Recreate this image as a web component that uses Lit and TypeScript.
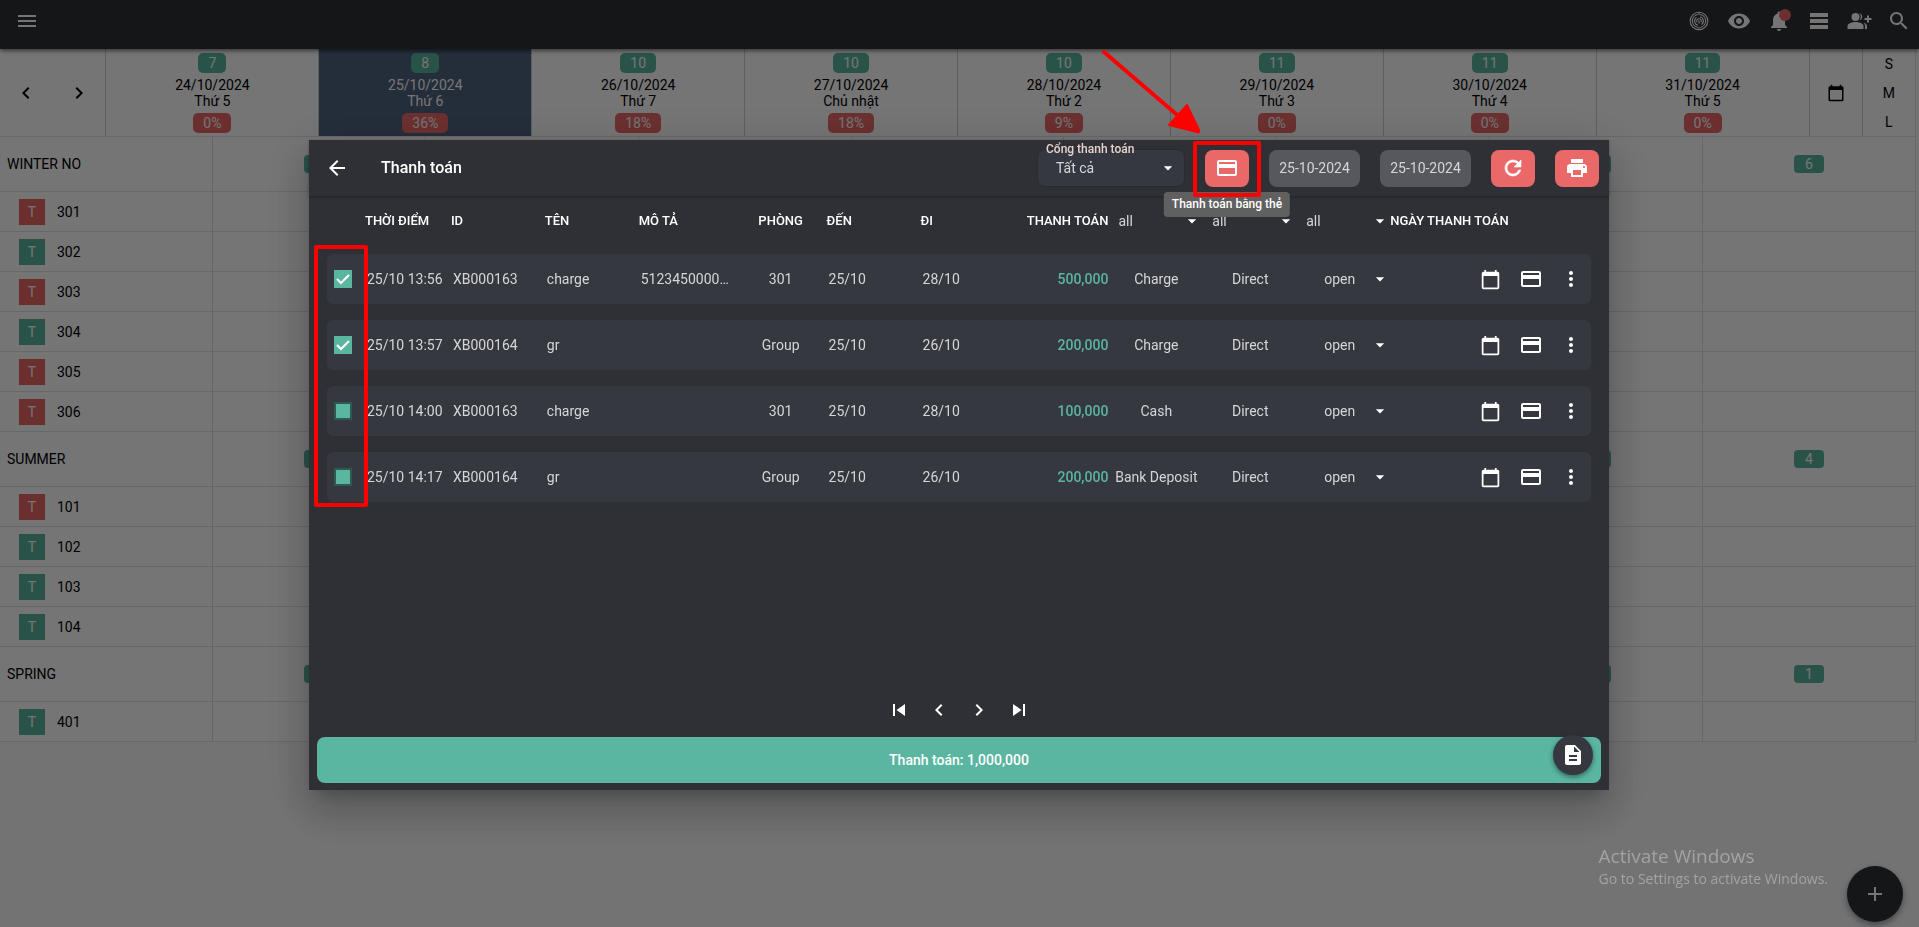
import { LitElement, html, css, svg, nothing } from "lit";
import { customElement, property, state } from "lit/decorators.js";
import { classMap } from "lit/directives/class-map.js";

const ICONS: Record<string, unknown> = {
  menu: svg`<path d="M3 18h18v-2H3v2zm0-5h18v-2H3v2zm0-7v2h18V6H3z"/>`,
  left: svg`<path d="M15.41 7.41L14 6l-6 6 6 6 1.41-1.41L10.83 12z"/>`,
  right: svg`<path d="M10 6L8.59 7.41 13.17 12l-4.58 4.59L10 18l6-6z"/>`,
  first: svg`<path d="M6 6h2v12H6zm3.5 6l8.500 6V6z"/>`,
  last: svg`<path d="M6 18l8.500-6L6 6v12zM16 6v12h2V6h-2z"/>`,
  back: svg`<path d="M20 11H7.830l5.590-5.590L12 4l-8 8 8 8 1.410-1.410L7.830 13H20v-2z"/>`,
  calendar: svg`<path d="M20 3h-1V1h-2v2H7V1H5v2H4c-1.100 0-2 .9-2 2v16c0 1.100.9 2 2 2h16c1.100 0 2-.9 2-2V5c0-1.100-.9-2-2-2zm0 18H4V8h16v13z"/>`,
  card: svg`<path d="M20 4H4c-1.110 0-1.990.89-1.990 2L2 18c0 1.110.89 2 2 2h16c1.110 0 2-.89 2-2V6c0-1.110-.89-2-2-2zm0 14H4v-6h16v6zm0-10H4V6h16v2z"/>`,
  more: svg`<path d="M12 8c1.100 0 2-.9 2-2s-.9-2-2-2-2 .9-2 2 .9 2 2 2zm0 2c-1.100 0-2 .9-2 2s.9 2 2 2 2-.9 2-2-.9-2-2-2zm0 6c-1.100 0-2 .9-2 2s.9 2 2 2 2-.9 2-2-.9-2-2-2z"/>`,
  refresh: svg`<path d="M17.650 6.350C16.200 4.900 14.210 4 12 4c-4.420 0-7.990 3.580-7.990 8s3.570 8 7.990 8c3.730 0 6.840-2.550 7.730-6h-2.080c-.82 2.330-3.040 4-5.650 4-3.310 0-6-2.690-6-6s2.690-6 6-6c1.660 0 3.140.69 4.220 1.780L13 11h7V4l-2.350 2.350z" stroke="currentColor" stroke-width=".6"/>`,
  print: svg`<path d="M19 8H5c-1.660 0-3 1.340-3 3v6h4v4h12v-4h4v-6c0-1.660-1.340-3-3-3zm-3 11H8v-5h8v5zm3-7c-.55 0-1-.45-1-1s.45-1 1-1 1 .45 1 1-.45 1-1 1zm-1-9H6v4h12V3z"/>`,
  doc: svg`<path d="M14 2H6c-1.100 0-1.990.9-1.990 2L4 20c0 1.100.89 2 1.990 2H18c1.100 0 2-.9 2-2V8l-6-6zm2 16H8v-2h8v2zm0-4H8v-2h8v2zm-3-5V3.500L18.500 9H13z"/>`,
  caret: svg`<path d="M7 10l5 5 5-5z"/>`,
  add: svg`<path d="M19 13h-6v6h-2v-6H5v-2h6V5h2v6h6v2z"/>`,
  eye: svg`<path d="M12 4.500C7 4.500 2.730 7.610 1 12c1.730 4.390 6 7.500 11 7.500s9.270-3.110 11-7.500c-1.730-4.390-6-7.500-11-7.500zM12 17c-2.760 0-5-2.240-5-5s2.240-5 5-5 5 2.240 5 5-2.240 5-5 5zm0-8c-1.660 0-3 1.340-3 3s1.340 3 3 3 3-1.340 3-3-1.340-3-3-3z"/>`,
  bell: svg`<path d="M12 22c1.100 0 2-.9 2-2h-4c0 1.100.89 2 2 2zm6-6v-5c0-3.070-1.640-5.640-4.500-6.320V4c0-.83-.67-1.500-1.500-1.500s-1.500.67-1.500 1.500v.68C7.630 5.360 6 7.920 6 11v5l-2 2v1h16v-1l-2-2z"/>`,
  list: svg`<path d="M3 4h18v4H3zM3 10h18v4H3zM3 16h18v4H3z"/>`,
  people: svg`<circle cx="8.500" cy="8" r="4"/><path d="M.5 20v-3c0-2.600 5-4 8-4s8 1.400 8 4v3z"/><path d="M12.500 4.200a4 4 0 0 1 0 7.600c1.800-2.300 1.800-5.300 0-7.600zM16.700 13.800c1.900.7 3.300 1.700 3.300 3.200v3h-2v-3c0-1.300-.5-2.400-1.300-3.200zM20 9V6.500h2V9h2.500v2H22v2.500h-2V11h-2.500V9z"/>`,
  search: svg`<path d="M15.500 14h-.79l-.28-.27C15.410 12.590 16 11.110 16 9.500 16 5.910 13.090 3 9.500 3S3 5.910 3 9.500 5.910 16 9.500 16c1.610 0 3.090-.59 4.230-1.570l.27.28v.79l5 4.990L20.490 19l-4.990-5zm-6 0C7.010 14 5 11.990 5 9.500S7.010 5 9.500 5 14 7.010 14 9.500 11.990 14 9.500 14z"/>`,
  rings: svg`<g fill="none" stroke="currentColor" stroke-width="1.100"><circle cx="12" cy="12" r="8.800"/><path d="M13.200 5.500a6.600 6.600 0 0 1 0 13M10.800 18.500a6.600 6.600 0 0 1 0-13M12 3.200v3M12 17.800v3"/><path d="M13 7.700a4.400 4.400 0 0 1 1.500 7.900M11 16.300a4.400 4.400 0 0 1-1.500-7.900"/><path d="M10 13.200a2.300 2.300 0 1 1 4 0M12 11.500v3.200"/></g>`,
};

@customElement("mi-icon")
export class MiIcon extends LitElement {
  static styles = css`
    :host { display: inline-flex; width: 24px; height: 24px; flex: none; }
    svg { width: 100%; height: 100%; fill: currentColor; overflow: visible; }
  `;
  @property() name = "";
  render() {
    return html`<svg viewBox="0 0 24 24" aria-hidden="true">${ICONS[this.name] ?? nothing}</svg>`;
  }
}

const DAYS = [
  { free: 7, date: "24/10/2024", day: "Thứ 5", rate: "0%" },
  { free: 8, date: "25/10/2024", day: "Thứ 6", rate: "36%", today: true },
  { free: 10, date: "26/10/2024", day: "Thứ 7", rate: "18%" },
  { free: 10, date: "27/10/2024", day: "Chủ nhật", rate: "18%" },
  { free: 10, date: "28/10/2024", day: "Thứ 2", rate: "9%" },
  { free: 11, date: "29/10/2024", day: "Thứ 3", rate: "0%" },
  { free: 11, date: "30/10/2024", day: "Thứ 4", rate: "0%" },
  { free: 11, date: "31/10/2024", day: "Thứ 5", rate: "0%" },
];

const GROUPS = [
  {
    name: "WINTER NO",
    free: [3, 4, 5, 5, 5, 6, 6, 6],
    rooms: [
      { no: "301", busy: true },
      { no: "302", busy: false },
      { no: "303", busy: true },
      { no: "304", busy: false },
      { no: "305", busy: true },
      { no: "306", busy: true },
    ],
  },
  {
    name: "SUMMER",
    free: [3, 3, 4, 4, 4, 4, 4, 4],
    rooms: [
      { no: "101", busy: true },
      { no: "102", busy: false },
      { no: "103", busy: false },
      { no: "104", busy: false },
    ],
  },
  { name: "SPRING", free: [1, 1, 1, 1, 1, 1, 1, 1], rooms: [{ no: "401", busy: false }] },
];

@customElement("room-calendar")
export class RoomCalendar extends LitElement {
  static styles = css`
    :host { display: block; font: 14px/16px Roboto, sans-serif; color: #000; }
    button { font: inherit; color: inherit; background: none; border: 0; padding: 0; cursor: pointer; }
    .bar {
      height: 49px; box-sizing: border-box; padding: 0 8px 7px 15px; background: #2f3036; color: #fff;
      display: flex; align-items: center; justify-content: space-between;
      position: relative; box-shadow: 0 2px 4px rgba(0, 0, 0, 0.5);
    }
    .bar button { display: flex; position: relative; }
    .tools { display: flex; gap: 16px; }
    .dot { position: absolute; right: 0; top: 0; width: 12px; height: 12px; border-radius: 50%; background: #ea6868; }
    .head {
      display: grid; grid-template-columns: 2fr repeat(8, 4fr) 1fr 1fr; margin-right: 3px;
      height: 87px; background: #fff; border-bottom: 1px solid #e2e2e2;
    }
    .head > div { border-right: 1px solid #cfcfcf; min-width: 0; }
    .head > .sizes { border-right-color: #e2e2e2; }
    .nav { display: flex; align-items: center; justify-content: space-around; }
    .nav button, .pick button { display: flex; }
    .pick { display: flex; align-items: center; justify-content: center; }
    .pick mi-icon { width: 18px; height: 18px; }
    .sizes { display: flex; flex-direction: column; justify-content: space-around; align-items: center; }
    .day { display: flex; flex-direction: column; align-items: center; padding-top: 4px; box-sizing: border-box; }
    .today { background: #50637f; color: #fff; }
    .badge { line-height: 20px; padding: 0 10px; border-radius: 5px; color: #fff; background: #5ab6a0; }
    .rate { background: #ea6868; }
    .day .badge:first-child { margin-bottom: 4px; }
    .day .rate { margin-top: 4px; }
    table { width: calc(100% - 3px); table-layout: fixed; border-collapse: separate; border-spacing: 0; background: #fff; }
    th, td { padding: 0; border: 0 solid #e2e2e2; border-width: 0 1px 1px 0; height: 39px; font-weight: 400; box-sizing: border-box; }
    th { text-align: left; border-right-color: #dcdcdc; }
    .group th, .group td { height: 55px; text-align: center; }
    .group th { text-align: left; padding-left: 7px; }
    .room th, .room td { height: 40px; }
    .free {
      display: inline-block; width: 30px; line-height: 18px; border-radius: 4px;
      background: #5ab6a0; color: #fff;
    }
    .label { display: flex; align-items: center; gap: 12px; padding-left: 19px; }
    .tag { width: 26px; line-height: 26px; text-align: center; color: #fff; background: #5ab6a0; }
    .busy { background: #ea6868; }
  `;

  render() {
    return html`
      <header class="bar">
        <button aria-label="Menu"><mi-icon name="menu"></mi-icon></button>
        <div class="tools">
          <button aria-label="Scan"><mi-icon name="rings"></mi-icon></button>
          <button aria-label="View"><mi-icon name="eye"></mi-icon></button>
          <button aria-label="Notifications"><mi-icon name="bell"></mi-icon><span class="dot"></span></button>
          <button aria-label="List"><mi-icon name="list"></mi-icon></button>
          <button aria-label="Add guests"><mi-icon name="people"></mi-icon></button>
          <button aria-label="Search"><mi-icon name="search"></mi-icon></button>
        </div>
      </header>
      <div class="head">
        <div class="nav">
          <button aria-label="Previous"><mi-icon name="left"></mi-icon></button>
          <button aria-label="Next"><mi-icon name="right"></mi-icon></button>
        </div>
        ${DAYS.map(
          (d) => html`<div class=${classMap({ day: true, today: !!d.today })}>
            <span class="badge">${d.free}</span>
            <span>${d.date}</span>
            <span>${d.day}</span>
            <span class="badge rate">${d.rate}</span>
          </div>`
        )}
        <div class="pick"><button aria-label="Pick date"><mi-icon name="calendar"></mi-icon></button></div>
        <div class="sizes"><button>S</button><button>M</button><button>L</button></div>
      </div>
      <table>
        <tbody>
          ${GROUPS.map(
            (g) => html`
              <tr class="group">
                <th scope="row">${g.name}</th>
                ${g.free.map((n) => html`<td><span class="free">${n}</span></td>`)}
              </tr>
              ${g.rooms.map(
                (r) => html`<tr class="room">
                  <th scope="row">
                    <div class="label"><span class=${classMap({ tag: true, busy: r.busy })}>T</span>${r.no}</div>
                  </th>
                  ${DAYS.map(() => html`<td></td>`)}
                </tr>`
              )}
            `
          )}
        </tbody>
      </table>
    `;
  }
}

const PAYMENTS = [
  { on: true, time: "25/10 13:56", id: "XB000163", name: "charge", note: "5123450000…", room: "301", from: "25/10", to: "28/10", sum: "500,000", via: "Charge" },
  { on: true, time: "25/10 13:57", id: "XB000164", name: "gr", note: "", room: "Group", from: "25/10", to: "26/10", sum: "200,000", via: "Charge" },
  { on: false, time: "25/10 14:00", id: "XB000163", name: "charge", note: "", room: "301", from: "25/10", to: "28/10", sum: "100,000", via: "Cash" },
  { on: false, time: "25/10 14:17", id: "XB000164", name: "gr", note: "", room: "Group", from: "25/10", to: "26/10", sum: "200,000", via: "Bank Deposit" },
];

@customElement("payment-dialog")
export class PaymentDialog extends LitElement {
  static styles = css`
    :host {
      display: flex; flex-direction: column; position: relative; box-sizing: border-box;
      width: min(1300px, 100%); min-height: 650px; background: #2f3035; color: #d5d6d8;
      font: 14px/16px Roboto, sans-serif;
      box-shadow: 0 11px 15px -7px rgba(0, 0, 0, 0.2), 0 24px 38px 3px rgba(0, 0, 0, 0.14), 0 9px 46px 8px rgba(0, 0, 0, 0.12);
    }
    button, select, input { font: inherit; color: inherit; margin: 0; }
    button { background: none; border: 0; padding: 0; cursor: pointer; display: flex; align-items: center; justify-content: center; }
    header {
      display: flex; align-items: center; gap: 20px; height: 56px; box-sizing: border-box;
      padding: 0 10px 0 16px; box-shadow: 0 1px 3px rgba(0, 0, 0, 0.3);
    }
    .back { color: #fff; }
    h1 { flex: 1; margin: 0 0 0 12px; font-size: 16px; font-weight: 500; line-height: 24px; color: #fff; }
    .gateway { position: relative; display: grid; width: 148px; }
    .gateway label { position: absolute; top: -8px; left: 9px; font-size: 12px; font-weight: 500; color: #e8d2cc; }
    .pick { display: grid; align-items: center; }
    .pick select, .pick mi-icon { grid-area: 1 / 1; }
    .pick mi-icon { justify-self: end; pointer-events: none; color: #fff; width: 20px; height: 20px; }
    select { appearance: none; border: 0; background: none; width: 100%; outline: none; padding: 0; cursor: pointer; }
    .gateway select { height: 38px; background: #353840; border: 1px solid #2a2b30; border-radius: 8px; padding-left: 18px; }
    .gateway mi-icon { margin-right: 7px; }
    .solid { width: 44px; height: 37px; border-radius: 8px; background: #ea6868; color: #fff; }
    .date { width: 91px; height: 37px; border-radius: 8px; background: #56585d; }
    .marked { position: relative; }
    .frame { position: absolute; border: 4px solid #f00; border-radius: 2px; box-sizing: border-box; pointer-events: none; z-index: 2; }
    .around { inset: -9px -12px -10px; }
    .arrow { position: absolute; left: -106px; top: -104px; width: 106px; height: 92px; pointer-events: none; z-index: 2; }
    .tip {
      position: absolute; top: 42px; left: 50%; transform: translateX(-50%); padding: 0 8px; white-space: nowrap;
      font-size: 12px; font-weight: 500; line-height: 25px; border-radius: 4px; background: #606061; color: #fff; z-index: 1;
    }
    .scroll { flex: 1; padding: 0 18px; position: relative; }
    table, thead, tbody { display: block; }
    tr {
      display: grid; align-items: center;
      grid-template-columns: 32fr 86fr 94fr 94fr 106fr 82fr 94fr 94fr 100fr 94fr 94fr 94fr 201fr;
    }
    thead tr { height: 50px; margin-bottom: 8px; }
    tbody tr { height: 50px; margin-bottom: 16px; background: #363840; border-radius: 6px; }
    th, td { padding: 0; min-width: 0; white-space: nowrap; text-align: left; }
    th { font-size: 13px; font-weight: 500; color: #fff; padding-left: 6px; }
    td { padding-left: 8px; }
    th.mid, td.mid { padding-left: 2px; text-align: center; }
    th.num, td.num { padding-left: 0; text-align: right; }
    td.num { color: #5ab6a0; font-weight: 500; }
    th.flat, td.flat { padding-left: 0; }
    th select { font-size: 14px; font-weight: 400; padding-left: 10px; color: #d5d6d8; height: 24px; }
    td select { padding-left: 28px; height: 24px; }
    .acts { display: flex; justify-content: flex-end; color: #fff; }
    .acts button { width: 40px; height: 40px; }
    .acts mi-icon.cal { width: 21px; height: 21px; }
    .check { display: grid; place-items: center; }
    .check input, .check svg { grid-area: 1 / 1; }
    .check input { appearance: none; width: 18px; height: 18px; background: #5ab6a0; border: 2px solid #2c5a50; box-sizing: border-box; }
    .check input:checked { border-color: #5ab6a0; }
    .check svg { width: 18px; height: 18px; fill: none; stroke: #fff; stroke-width: 2; pointer-events: none; }
    .checks { left: 5px; top: 49px; width: 54px; height: 262px; }
    .pager { display: flex; justify-content: center; height: 40px; margin-bottom: 7px; color: #fff; }
    .pager button { width: 40px; }
    .foot { position: relative; padding: 0 8px 7px; }
    .total { width: 100%; height: 46px; border-radius: 8px; background: #5ab6a0; color: #fff; font-weight: 500; }
    .fab {
      position: absolute; right: 16px; top: -2px; width: 40px; height: 40px; border-radius: 50%;
      background: #363840; color: #fff; box-shadow: 0 2px 5px rgba(0, 0, 0, 0.45);
    }
  `;

  @state() private rows = PAYMENTS;

  private toggle(i: number) {
    this.rows = this.rows.map((r, k) => (k === i ? { ...r, on: !r.on } : r));
  }

  private filter(label: string) {
    return html`<th class="flat" scope="col">
      <div class="pick">
        <select aria-label=${label}><option>all</option></select>
        <mi-icon name="caret"></mi-icon>
      </div>
    </th>`;
  }

  render() {
    return html`
      <header>
        <button class="back" aria-label="Back"><mi-icon name="back"></mi-icon></button>
        <h1>Thanh toán</h1>
        <div class="gateway pick">
          <label for="gateway">Cổng thanh toán</label>
          <select id="gateway"><option>Tất cả</option></select>
          <mi-icon name="caret"></mi-icon>
        </div>
        <div class="marked">
          <button class="solid" aria-label="Thanh toán bằng thẻ"><mi-icon name="card"></mi-icon></button>
          <span class="tip" role="tooltip">Thanh toán bằng thẻ</span>
          <span class="frame around"></span>
          <svg class="arrow" viewBox="0 0 106 92">
            <path d="M5 6L84 74" stroke="#f00" stroke-width="4" stroke-linecap="round" />
            <path d="M88 59L100 84Q101 87 98 86L70 79Z" fill="#f00" stroke="#f00" stroke-width="2" stroke-linejoin="round" />
          </svg>
        </div>
        <button class="date">25-10-2024</button>
        <button class="date">25-10-2024</button>
        <button class="solid" aria-label="Refresh"><mi-icon name="refresh"></mi-icon></button>
        <button class="solid" aria-label="Print"><mi-icon name="print"></mi-icon></button>
      </header>
      <div class="scroll">
        <table>
          <thead>
            <tr>
              <th></th>
              <th scope="col">THỜI ĐIỂM</th>
              <th scope="col">ID</th>
              <th scope="col">TÊN</th>
              <th scope="col">MÔ TẢ</th>
              <th class="mid" scope="col">PHÒNG</th>
              <th scope="col">ĐẾN</th>
              <th scope="col">ĐI</th>
              <th class="num" scope="col">THANH TOÁN</th>
              ${this.filter("Method")} ${this.filter("Channel")} ${this.filter("Status")}
              <th class="flat" scope="col">NGÀY THANH TOÁN</th>
            </tr>
          </thead>
          <tbody>
            ${this.rows.map(
              (r, i) => html`<tr>
                <td class="flat">
                  <div class="check">
                    <input type="checkbox" aria-label=${r.time} .checked=${r.on} @change=${() => this.toggle(i)} />
                    ${r.on ? html`<svg viewBox="0 0 18 18"><path d="M3 9l4 4 8-8" /></svg>` : nothing}
                  </div>
                </td>
                <td>${r.time}</td>
                <td>${r.id}</td>
                <td>${r.name}</td>
                <td>${r.note}</td>
                <td class="mid">${r.room}</td>
                <td>${r.from}</td>
                <td>${r.to}</td>
                <td class="num">${r.sum}</td>
                <td class="mid">${r.via}</td>
                <td class="mid">Direct</td>
                <td class="flat">
                  <div class="pick">
                    <select aria-label="Status"><option>open</option></select>
                    <mi-icon name="caret"></mi-icon>
                  </div>
                </td>
                <td class="flat">
                  <div class="acts">
                    <button aria-label="Date"><mi-icon class="cal" name="calendar"></mi-icon></button>
                    <button aria-label="Card"><mi-icon name="card"></mi-icon></button>
                    <button aria-label="More"><mi-icon name="more"></mi-icon></button>
                  </div>
                </td>
              </tr>`
            )}
          </tbody>
        </table>
        <span class="frame checks"></span>
      </div>
      <nav class="pager" aria-label="Pages">
        <button aria-label="First page"><mi-icon name="first"></mi-icon></button>
        <button aria-label="Previous page"><mi-icon name="left"></mi-icon></button>
        <button aria-label="Next page"><mi-icon name="right"></mi-icon></button>
        <button aria-label="Last page"><mi-icon name="last"></mi-icon></button>
      </nav>
      <div class="foot">
        <button class="total">Thanh toán: 1,000,000</button>
        <button class="fab" aria-label="Report"><mi-icon name="doc"></mi-icon></button>
      </div>
    `;
  }
}

@customElement("app-root")
export class AppRoot extends LitElement {
  static styles = css`
    :host { display: block; min-height: 100vh; background: #fafafa; }
    .add {
      position: fixed; right: 16px; bottom: 5px; width: 56px; height: 56px; border: 0; border-radius: 50%; padding: 0;
      background: #2f3036; color: #fff; display: grid; place-items: center; box-shadow: 0 3px 6px rgba(0, 0, 0, 0.4);
    }
    .scrim {
      position: fixed; inset: 0; display: grid; place-items: center; overflow: auto; padding: 3px 1px 0 0; box-sizing: border-box;
      background: rgba(0, 0, 0, 0.54);
    }
    .notice { position: fixed; right: 91px; bottom: 38px; color: #a3a3a3; font: 14px/20px "Open Sans", sans-serif; pointer-events: none; }
    .notice strong { display: block; font-size: 19px; line-height: 26px; font-weight: 400; }
  `;

  render() {
    return html`
      <room-calendar></room-calendar>
      <button class="add" aria-label="Add"><mi-icon name="add"></mi-icon></button>
      <div class="scrim"><payment-dialog role="dialog" aria-label="Thanh toán"></payment-dialog></div>
      <div class="notice"><strong>Activate Windows</strong>Go to Settings to activate Windows.</div>
    `;
  }
}
